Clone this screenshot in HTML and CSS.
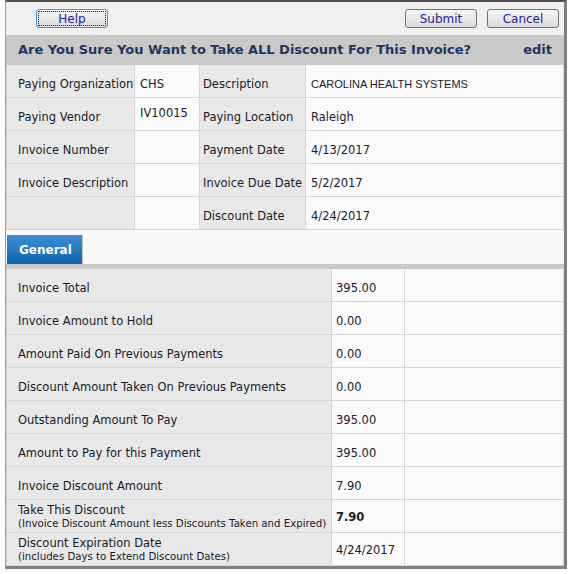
FILE: index.html
```html
<!DOCTYPE html>
<html lang="en">
  <head>
    <meta charset="UTF-8">
    <title>Take All Discount</title>
    <link rel="stylesheet" href="styles.css">
  </head>
  <body>
    <div class="frame">
      <div class="toolbar">
        <button class="btn focus">Help</button>
        <span class="spacer"></span>
        <button class="btn">Submit</button>
        <button class="btn">Cancel</button>
      </div>
      <div class="title">
        <span>Are You Sure You Want to Take ALL Discount For This Invoice?</span>
        <span>edit</span>
      </div>
      <table class="info">
        <tr>
          <td class="lbl c1">Paying Organization</td>
          <td class="val c2">CHS</td>
          <td class="lbl c3">Description</td>
          <td class="val arial">CAROLINA HEALTH SYSTEMS</td>
        </tr>
        <tr>
          <td class="lbl">Paying Vendor</td>
          <td class="val top">IV10015</td>
          <td class="lbl">Paying Location</td>
          <td class="val">Raleigh</td>
        </tr>
        <tr>
          <td class="lbl">Invoice Number</td>
          <td class="val"></td>
          <td class="lbl">Payment Date</td>
          <td class="val">4/13/2017</td>
        </tr>
        <tr>
          <td class="lbl">Invoice Description</td>
          <td class="val"></td>
          <td class="lbl">Invoice Due Date</td>
          <td class="val">5/2/2017</td>
        </tr>
        <tr>
          <td class="lbl"></td>
          <td class="val"></td>
          <td class="lbl">Discount Date</td>
          <td class="val">4/24/2017</td>
        </tr>
      </table>
      <div class="tabs">
        <div class="tab">General</div>
      </div>
      <table class="amounts">
        <tr><td class="lbl a1">Invoice Total</td><td class="val a2">395.00</td><td class="val"></td></tr>
        <tr><td class="lbl">Invoice Amount to Hold</td><td class="val">0.00</td><td class="val"></td></tr>
        <tr><td class="lbl">Amount Paid On Previous Payments</td><td class="val">0.00</td><td class="val"></td></tr>
        <tr><td class="lbl">Discount Amount Taken On Previous Payments</td><td class="val">0.00</td><td class="val"></td></tr>
        <tr><td class="lbl">Outstanding Amount To Pay</td><td class="val">395.00</td><td class="val"></td></tr>
        <tr><td class="lbl">Amount to Pay for this Payment</td><td class="val">395.00</td><td class="val"></td></tr>
        <tr><td class="lbl">Invoice Discount Amount</td><td class="val">7.90</td><td class="val"></td></tr>
        <tr class="two">
          <td class="lbl">Take This Discount<br><small>(Invoice Discount Amount less Discounts Taken and Expired)</small></td>
          <td class="val"><b>7.90</b></td><td class="val"></td>
        </tr>
        <tr class="two">
          <td class="lbl">Discount Expiration Date<br><small>(includes Days to Extend Discount Dates)</small></td>
          <td class="val">4/24/2017</td><td class="val"></td>
        </tr>
      </table>
    </div>
  </body>
</html>
```

FILE: styles.css
```css
html, body {
  margin: 0px;
  background-color: white;
}
body {
  font-family: "DejaVu Sans", Verdana, sans-serif;
  font-size: 11.5px;
  color: #1a1a2a;
}
.frame {
  margin-left: 5px;
  width: 558px;
  border-top: 2px solid #5b5050;
  border-left: 1px solid #9a9a9a;
  border-right: 3px solid #7f7f7f;
  border-bottom: 3px solid #7f7f7f;
  background-color: #fafafa;
}
.toolbar {
  display: flex;
  align-items: center;
  gap: 10px;
  height: 33px;
  padding: 0 5px 0 30px;
  background-color: #f0f0f0;
}
.spacer {
  flex: 1;
}
.btn {
  width: 72px;
  height: 19px;
  padding: 0;
  font-family: "DejaVu Sans", Verdana, sans-serif;
  font-size: 12px;
  color: #22229a;
  background: linear-gradient(#f6f6f6, #dcdcdc);
  border: 1px solid #707070;
  border-radius: 3px;
}
.btn.focus {
  border: 1px solid #3c9ee0;
  outline: 1px dotted #222;
  outline-offset: -3px;
}
.title {
  display: flex;
  justify-content: space-between;
  align-items: center;
  height: 30px;
  padding: 0 12px 2px 12px;
  box-sizing: border-box;
  background-color: #c9c9c9;
  color: #1c3763;
  font-weight: bold;
  font-size: 13px;
}
table {
  width: 100%;
  border-collapse: collapse;
  table-layout: fixed;
}
td {
  height: 27px;
  padding: 5px 0 0 11px;
  border: 1px solid #d6d6d6;
  white-space: nowrap;
  overflow: hidden;
}
.lbl {
  background-color: #e8e8e8;
}
.val {
  background-color: #fafafa;
  padding-left: 5px;
}
.info .c1 {
  width: 116px;
}
.info .c2 {
  width: 59px;
}
.info .c3 {
  width: 102px;
}
.info td:nth-child(3) {
  padding-left: 3px;
}
.info .arial {
  font-family: "Liberation Sans", Arial, sans-serif;
  font-size: 11px;
}
.info .top {
  vertical-align: top;
  padding-top: 8px;
  height: 24px;
}
.info tr:first-child td,
.amounts tr:first-child td {
  border-top: none;
}
.tabs {
  height: 34px;
  display: flex;
  align-items: flex-end;
  padding-left: 1px;
  background-color: #f9f9f9;
  border-bottom: 5px solid #c8c8c8;
}
.tab {
  width: 63px;
  height: 29px;
  line-height: 31px;
  padding-left: 12px;
  color: white;
  font-weight: bold;
  font-size: 12px;
  background: linear-gradient(#3e8fd5, #0e64b4);
  border-right: 1px solid #c0c0c0;
}
.amounts .a1 {
  width: 313px;
}
.amounts td:nth-child(2) {
  width: 68px;
  padding-left: 4px;
}
.amounts b {
  font-size: 11.5px;
}
.amounts .two td {
  height: 30px;
  padding-top: 2px;
  line-height: 13px;
}
small {
  font-size: 10.2px;
}
```
